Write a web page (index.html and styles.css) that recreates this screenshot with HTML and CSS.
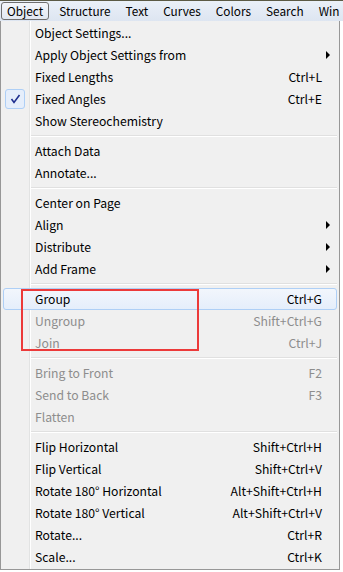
FILE: index.html
```html
<!DOCTYPE html>
<html lang="en">

<head>
    <meta charset="UTF-8">
    <title>Object menu</title>
    <link rel="stylesheet" href="styles.css">
</head>

<body>
    <div class="menubar">
        <span class="top open">Object</span>
        <span class="top">Structure</span>
        <span class="top">Text</span>
        <span class="top">Curves</span>
        <span class="top">Colors</span>
        <span class="top">Search</span>
        <span class="top">Win</span>
    </div>

    <div class="menu">
        <div class="item"><span class="label">Object Settings...</span></div>
        <div class="item sub"><span class="label">Apply Object Settings from</span></div>
        <div class="item"><span class="label">Fixed Lengths</span><span class="key">Ctrl+L</span></div>
        <div class="item">
            <span class="check">
                <svg width="11" height="10" viewBox="0 0 11 10"><path d="M1.5 5 L4 8.5 L9.5 1" fill="none" stroke="#1f2f8f" stroke-width="1.6"/></svg>
            </span>
            <span class="label">Fixed Angles</span><span class="key">Ctrl+E</span>
        </div>
        <div class="item"><span class="label">Show Stereochemistry</span></div>
        <div class="sep"></div>
        <div class="item"><span class="label">Attach Data</span></div>
        <div class="item"><span class="label">Annotate...</span></div>
        <div class="sep"></div>
        <div class="item"><span class="label">Center on Page</span></div>
        <div class="item sub"><span class="label">Align</span></div>
        <div class="item sub"><span class="label">Distribute</span></div>
        <div class="item sub"><span class="label">Add Frame</span></div>
        <div class="sep"></div>
        <div class="group-box">
            <div class="item hover"><span class="label">Group</span><span class="key">Ctrl+G</span></div>
            <div class="item off"><span class="label">Ungroup</span><span class="key">Shift+Ctrl+G</span></div>
            <div class="item off"><span class="label">Join</span><span class="key">Ctrl+J</span></div>
            <div class="mark"></div>
        </div>
        <div class="sep"></div>
        <div class="item off"><span class="label">Bring to Front</span><span class="key">F2</span></div>
        <div class="item off"><span class="label">Send to Back</span><span class="key">F3</span></div>
        <div class="item off"><span class="label">Flatten</span></div>
        <div class="sep"></div>
        <div class="item"><span class="label">Flip Horizontal</span><span class="key">Shift+Ctrl+H</span></div>
        <div class="item"><span class="label">Flip Vertical</span><span class="key">Shift+Ctrl+V</span></div>
        <div class="item"><span class="label">Rotate 180° Horizontal</span><span class="key">Alt+Shift+Ctrl+H</span></div>
        <div class="item"><span class="label">Rotate 180° Vertical</span><span class="key">Alt+Shift+Ctrl+V</span></div>
        <div class="item"><span class="label">Rotate...</span><span class="key">Ctrl+R</span></div>
        <div class="item"><span class="label">Scale...</span><span class="key">Ctrl+K</span></div>
    </div>
</body>

</html>
```

FILE: styles.css
```css
body {
    margin: 0;
    width: 343px;
    height: 572px;
    overflow: hidden;
    background: #ffffff;
    font-family: "Noto Sans CJK SC", "Noto Sans", sans-serif;
    font-size: 12.2px;
    color: #000;
}

.menubar {
    height: 20px;
    border-top: 1px solid #5b5a45;
    background: linear-gradient(#eaf0f8, #dde5f1);
    display: flex;
    align-items: center;
    white-space: nowrap;
    overflow: hidden;
    font-size: 11.8px;
}

.top {
    display: inline-block;
    padding: 0 7px 0 8px;
    line-height: 16px;
}

.top.open {
    margin-left: 1px;
    margin-right: 2px;
    padding: 0 5px;
    border: 1px solid #6f6f6f;
    border-radius: 3px;
    background: linear-gradient(#f4f6fa, #e2e8f1);
    width: 37px;
    text-align: center;
}

.menu {
    width: 338px;
    border: 1px solid #979797;
    border-top: none;
    background: #f0f0f0;
    background-image: linear-gradient(90deg, transparent 28px, #e2e3e3 28px, #e2e3e3 29px, #ffffff 29px, #ffffff 30px, transparent 30px);
    padding: 1px 0 1px;
}

.item {
    position: relative;
    height: 22px;
    display: flex;
    align-items: center;
    padding: 0 15px 0 32px;
    margin: 0 2px;
    box-sizing: border-box;
}

.label {
    flex: 1;
}

.key {
    text-align: right;
}

.off {
    color: #8d8d8d;
}

.hover {
    background: linear-gradient(#f2f6fc, #e5eefb);
    border: 1px solid #aecff6;
    border-radius: 3px;
    padding-left: 31px;
    padding-right: 14px;
}

.sub::after {
    content: "";
    position: absolute;
    right: 7px;
    top: 7px;
    border-left: 4px solid #000;
    border-top: 4px solid transparent;
    border-bottom: 4px solid transparent;
}

.check {
    position: absolute;
    left: 2px;
    top: 1px;
    width: 20px;
    height: 20px;
    box-sizing: border-box;
    border: 1px solid #aecff6;
    border-radius: 3px;
    background: #e5eefb;
    display: flex;
    align-items: center;
    justify-content: center;
}

.sep {
    height: 1px;
    margin: 3px 2px 3px 30px;
    border-top: 1px solid #e0e0e0;
    background: #ffffff;
}

.group-box {
    position: relative;
}

.mark {
    position: absolute;
    left: 20px;
    top: 1px;
    width: 174px;
    height: 58px;
    border: 2px solid #ec3a3a;
}
```
